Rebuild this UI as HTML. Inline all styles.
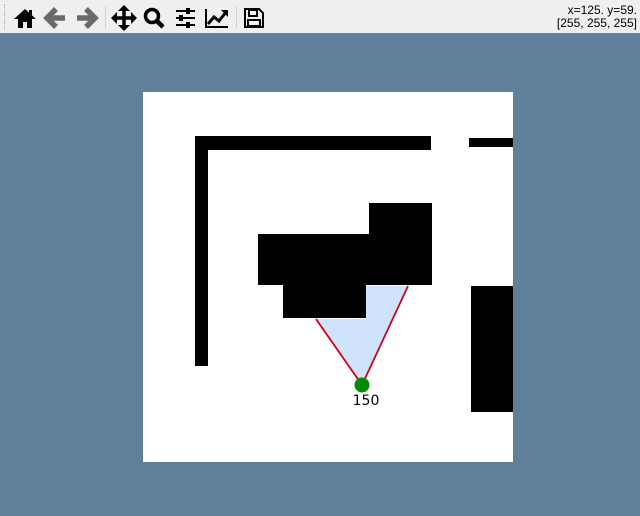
<!DOCTYPE html>
<html><head><meta charset="utf-8"><style>
html,body{margin:0;padding:0}
body{width:640px;height:516px;overflow:hidden;background:#5f7f9b;position:relative;font-family:"Liberation Sans","DejaVu Sans",sans-serif}
#tb{position:absolute;left:0;top:0;width:640px;height:33px;background:#efefef}
.sep{position:absolute;top:6px;width:1px;height:22px;background:#d0d0d0}
#grip{position:absolute;left:4px;top:4px;width:2px;height:26px;border-left:1px dotted #aaa}
#coord{position:absolute;right:3px;top:4px;font-size:12px;line-height:13px;text-align:right;color:#000;font-family:"Liberation Sans",sans-serif}
.b{position:absolute;background:#000}
</style></head><body>
<div id="tb">
<div id="grip"></div>
<svg width="640" height="33" style="position:absolute;left:0;top:0">
<path d="M14 19 L25 9 L36 19 L32 19 L32 28 L27 28 L27 22 L23 22 L23 28 L18 28 L18 19 Z" fill="#000"/>
<rect x="29" y="10" width="3" height="6" fill="#000"/>
<path d="M56 9 L47 18 L56 27 M48 18 L65 18" stroke="#6a6a6a" stroke-width="5.5" fill="none"/>
<path d="M86 9 L95 18 L86 27 M94 18 L77 18" stroke="#6a6a6a" stroke-width="5.5" fill="none"/>
<path d="M124 9 L124 28 M114 18 L134 18" stroke="#000" stroke-width="3.5"/>
<path d="M124 5 L118 11 L130 11 Z M124 31 L118 25 L130 25 Z M111 18 L117 12 L117 24 Z M137 18 L131 12 L131 24 Z" fill="#000"/>
<circle cx="152" cy="16" r="6.5" stroke="#000" stroke-width="3.5" fill="none"/>
<path d="M156 20 L163 27" stroke="#000" stroke-width="4.5"/>
<path d="M176 11 L195 11 M176 18 L195 18 M176 25 L195 25" stroke="#000" stroke-width="2"/>
<rect x="186" y="8" width="4" height="6" fill="#000"/><rect x="179" y="15" width="4" height="6" fill="#000"/><rect x="186" y="22" width="4" height="6" fill="#000"/>
<path d="M206 9 L206 27 L228 27" stroke="#000" stroke-width="2" fill="none"/>
<path d="M208 24 L214 17 L219 21 L226 12" stroke="#000" stroke-width="3" fill="none"/>
<path d="M228 10 L221 10 L228 17 Z" fill="#000"/>
<path d="M245 9 L259 9 L263 13 L263 27 L245 27 Z" stroke="#000" stroke-width="2" fill="none"/>
<rect x="249" y="10" width="8" height="6" stroke="#000" stroke-width="2" fill="none"/>
<rect x="248" y="20" width="12" height="6" stroke="#000" stroke-width="2" fill="none"/>
</svg>
<div class="sep" style="left:105px"></div>
<div class="sep" style="left:236px"></div>
<div id="coord">x=125. y=59.<br>[255, 255, 255]</div>
</div>
<div style="position:absolute;left:143px;top:92px;width:370px;height:370px;background:#fff"></div>
<div class="b" style="left:195px;top:136px;width:236px;height:14px"></div>
<div class="b" style="left:195px;top:136px;width:13px;height:230px"></div>
<div class="b" style="left:469px;top:138px;width:44px;height:9px"></div>
<div class="b" style="left:369px;top:203px;width:63px;height:82px"></div>
<div class="b" style="left:258px;top:234px;width:174px;height:51px"></div>
<div class="b" style="left:283px;top:285px;width:83px;height:33px"></div>
<div class="b" style="left:471px;top:286px;width:42px;height:126px"></div>
<svg width="640" height="516" style="position:absolute;left:0;top:0">
<polygon points="316,319 366,319 366,286 408,286 362,385" fill="#cfe3fb"/>
<path d="M316 319 L362 385 L408 286" stroke="#d0021b" stroke-width="1.8" fill="none"/>
<circle cx="362" cy="385" r="7.5" fill="#008c00"/>
<text x="366" y="405" font-size="14" text-anchor="middle" font-family="DejaVu Sans,sans-serif" fill="#000">150</text>
</svg>
</body></html>
